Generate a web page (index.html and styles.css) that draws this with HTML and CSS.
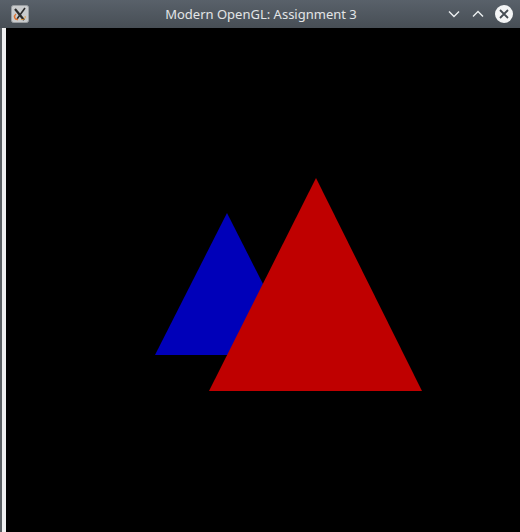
FILE: index.html
```html
<!DOCTYPE html>
<html>
<head>
<meta charset="utf-8">
<link rel="stylesheet" href="styles.css">
</head>
<body>
<div class="window">
  <div class="titlebar">
    <div class="app-icon">
      <svg width="18" height="18" viewBox="0 0 18 18">
        <rect x="0.5" y="0.5" width="17" height="17" rx="2" fill="#c9cbcd" stroke="#9a9ea2"/>
        <path d="M4 4 L13 15" stroke="#2b2b2b" stroke-width="2.2"/>
        <path d="M14 3 L6 14" stroke="#2b2b2b" stroke-width="1.6"/>
        <path d="M5 9 C2.5 11 3.5 15 7 14.5" stroke="#e0702a" stroke-width="1.4" fill="none"/>
        <path d="M10 14.5 C13 15 15 13 14 11" stroke="#e89b3a" stroke-width="1" fill="none"/>
      </svg>
    </div>
    <div class="title">Modern OpenGL: Assignment 3</div>
    <div class="buttons">
      <svg class="btn" width="14" height="14" viewBox="0 0 14 14"><path d="M2 4.5 L7 9.5 L12 4.5" stroke="#eceff1" stroke-width="1.4" fill="none"/></svg>
      <svg class="btn" width="14" height="14" viewBox="0 0 14 14"><path d="M2 9.5 L7 4.5 L12 9.5" stroke="#eceff1" stroke-width="1.4" fill="none"/></svg>
      <svg class="btn close" width="18" height="18" viewBox="0 0 18 18"><circle cx="9" cy="9" r="9" fill="#f4f5f6"/><path d="M5 5 L13 13 M13 5 L5 13" stroke="#454c53" stroke-width="1.8"/></svg>
    </div>
  </div>
  <div class="body">
    <div class="edge-dark"></div>
    <div class="edge-light"></div>
    <svg class="viewport" width="514" height="504" viewBox="6 28 514 504">
      <polygon points="227,213 155,355 299,355" fill="#0000b9"/>
      <polygon points="316,178 209,391 422,391" fill="#bf0000"/>
    </svg>
  </div>
</div>
</body>
</html>
```
FILE: styles.css
```css
html, body {
  margin: 0;
  padding: 0;
  background: #000;
}
.window {
  width: 520px;
  height: 532px;
  display: flex;
  flex-direction: column;
  overflow: hidden;
}
.titlebar {
  height: 28px;
  flex: none;
  display: grid;
  grid-template-columns: 1fr auto 1fr;
  align-items: center;
  background: linear-gradient(#59616a, #474e55);
}
.app-icon {
  width: 18px;
  height: 18px;
  margin-left: 11px;
  display: flex;
}
.title {
  text-align: center;
  font-family: "Noto Sans", "Open Sans", sans-serif;
  font-size: 13px;
  color: #e3e5e7;
  padding-left: 2px;
}
.buttons {
  display: flex;
  justify-content: flex-end;
  align-items: center;
  gap: 10px;
  margin-right: 7px;
}
.btn { display: block; }
.body {
  flex: 1;
  display: flex;
  background: #000;
}
.edge-dark {
  width: 2px;
  background: #5a5f64;
}
.edge-light {
  width: 4px;
  background: #eff0f1;
}
.viewport {
  display: block;
  flex: none;
}
```
